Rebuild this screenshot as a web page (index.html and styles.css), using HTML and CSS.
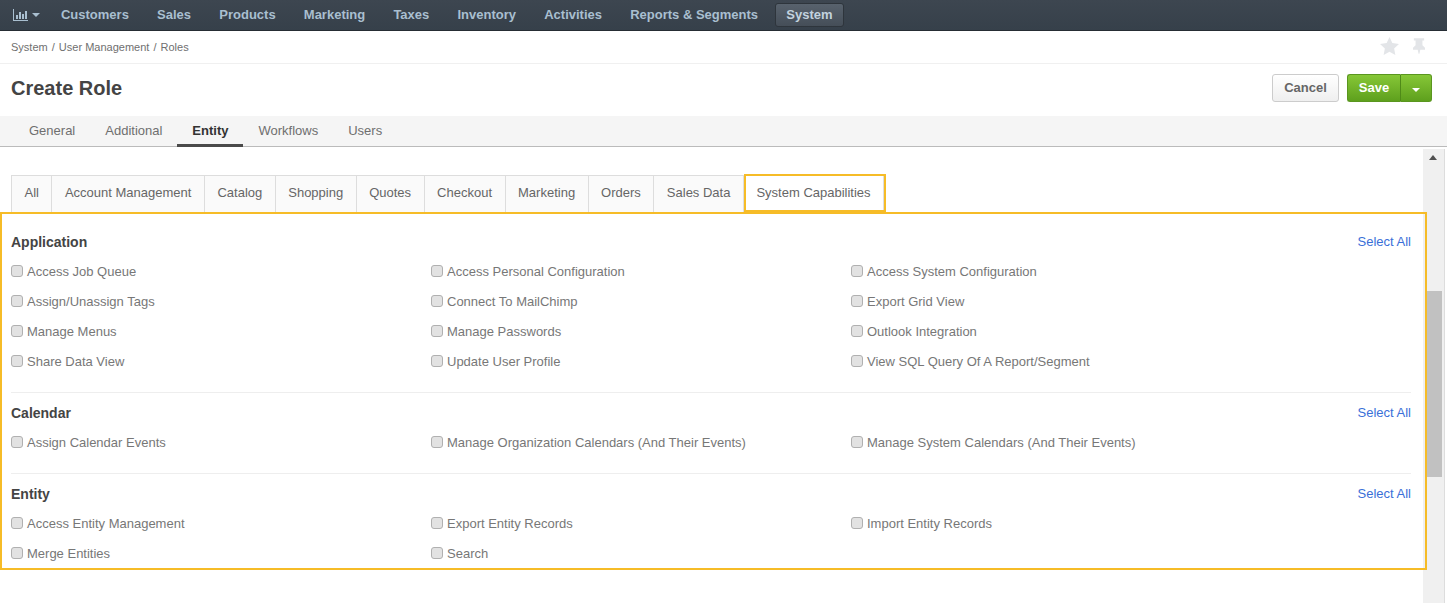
FILE: index.html
```html
<!DOCTYPE html>
<html lang="en">
<head>
  <meta charset="UTF-8" />
  <title>Create Role</title>
  <link rel="stylesheet" href="styles.css">
</head>
<body>

  <nav class="topnav">
    <a class="topnav-chart" href="#">
      <svg width="15" height="12" viewBox="0 0 15 12"><path fill="#a9bfd0" d="M0 0h1v11h14v1H0zM3 6h2v4H3zM6 3h2v7H6zM9 5h2v5H9zM12 2h2v8h-2z"/></svg>
      <span class="caret caret-nav"></span>
    </a>
    <a href="#">Customers</a>
    <a href="#">Sales</a>
    <a href="#">Products</a>
    <a href="#">Marketing</a>
    <a href="#">Taxes</a>
    <a href="#">Inventory</a>
    <a href="#">Activities</a>
    <a href="#">Reports &amp; Segments</a>
    <a class="active" href="#">System</a>
  </nav>

  <div class="crumbs">
    <div class="crumbs-path">System <i>/</i> User Management <i>/</i> Roles</div>
    <div class="crumbs-icons">
      <svg width="19" height="18" viewBox="0 0 20 19"><path fill="#e3e5e8" d="M10 0l3 6.400 7 .9-5.100 4.800 1.300 6.900L10 15.600 3.800 19l1.300-6.900L0 7.300l7-.9z"/></svg>
      <svg width="12" height="18" viewBox="0 0 14 18"><path fill="#e3e5e8" d="M1 0h12v2.500h-2V8l3 3v2.500H8.500L7.500 18h-1l-1-4.500H0V11l3-3V2.500H1z"/></svg>
    </div>
  </div>

  <header class="title-bar">
    <h1>Create Role</h1>
    <div class="actions">
      <button class="btn-cancel" type="button">Cancel</button>
      <div class="save-group">
        <button class="btn-save" type="button">Save</button>
        <button class="btn-save-more" type="button"><span class="caret"></span></button>
      </div>
    </div>
  </header>

  <div class="main-tabs">
    <a href="#">General</a>
    <a href="#">Additional</a>
    <a class="active" href="#">Entity</a>
    <a href="#">Workflows</a>
    <a href="#">Users</a>
  </div>

  <div class="content">
    <div class="content-body">
      <div class="sub-tabs">
        <a href="#">All</a>
        <a href="#">Account Management</a>
        <a href="#">Catalog</a>
        <a href="#">Shopping</a>
        <a href="#">Quotes</a>
        <a href="#">Checkout</a>
        <a href="#">Marketing</a>
        <a href="#">Orders</a>
        <a href="#">Sales Data</a>
        <a class="active" href="#">System Capabilities</a>
      </div>

      <section class="group">
        <div class="group-head"><h2>Application</h2><a href="#">Select All</a></div>
        <div class="perms">
          <label><input type="checkbox">Access Job Queue</label>
          <label><input type="checkbox">Access Personal Configuration</label>
          <label><input type="checkbox">Access System Configuration</label>
          <label><input type="checkbox">Assign/Unassign Tags</label>
          <label><input type="checkbox">Connect To MailChimp</label>
          <label><input type="checkbox">Export Grid View</label>
          <label><input type="checkbox">Manage Menus</label>
          <label><input type="checkbox">Manage Passwords</label>
          <label><input type="checkbox">Outlook Integration</label>
          <label><input type="checkbox">Share Data View</label>
          <label><input type="checkbox">Update User Profile</label>
          <label><input type="checkbox">View SQL Query Of A Report/Segment</label>
        </div>
      </section>

      <section class="group">
        <div class="group-head"><h2>Calendar</h2><a href="#">Select All</a></div>
        <div class="perms">
          <label><input type="checkbox">Assign Calendar Events</label>
          <label><input type="checkbox">Manage Organization Calendars (And Their Events)</label>
          <label><input type="checkbox">Manage System Calendars (And Their Events)</label>
        </div>
      </section>

      <section class="group">
        <div class="group-head"><h2>Entity</h2><a href="#">Select All</a></div>
        <div class="perms">
          <label><input type="checkbox">Access Entity Management</label>
          <label><input type="checkbox">Export Entity Records</label>
          <label><input type="checkbox">Import Entity Records</label>
          <label><input type="checkbox">Merge Entities</label>
          <label><input type="checkbox">Search</label>
        </div>
      </section>
    </div>

    <div class="scrollbar">
      <span class="scroll-up"></span>
      <span class="scroll-thumb"></span>
    </div>
  </div>

  <!-- yellow callouts drawn over the page -->
  <div class="mark mark-tab"></div>
  <div class="mark mark-panel"></div>

</body>
</html>
```

FILE: styles.css
```css
html, body {
  height: 603px;
  overflow: hidden;
}

body {
  margin: 0;
  position: relative;
  font-family: "Liberation Sans", Arial, sans-serif;
  font-size: 14px;
  color: #6b6b6b;
  background-color: #fff;
}

a {
  text-decoration: none;
}

.caret {
  display: inline-block;
  border-top: 4px solid #fff;
  border-left: 4px solid transparent;
  border-right: 4px solid transparent;
}

/* top nav */
.topnav {
  display: flex;
  align-items: center;
  gap: 6.2px;
  height: 30px;
  padding-left: 3px;
  background: linear-gradient(#3d4650, #36404a);
  border-bottom: 1px solid #262d34;
}

.topnav a {
  padding: 0 11px;
  line-height: 24px;
  font-size: 13px;
  font-weight: bold;
  color: #a9bfd0;
  border-radius: 3px;
}

.topnav a.active {
  padding: 0 10px;
  color: #c3d3df;
  background: linear-gradient(#58626d, #454e58);
  border: 1px solid #2e353c;
  line-height: 22px;
}

.topnav a.topnav-chart {
  display: flex;
  align-items: center;
  gap: 4px;
  padding: 0 3.8px 0 10px;
}

.caret-nav {
  border-top-color: #a9bfd0;
}

/* breadcrumb */
.crumbs {
  display: flex;
  align-items: center;
  justify-content: space-between;
  height: 33px;
  padding: 0 22px 0 11px;
  border-bottom: 1px solid #f0f0f0;
  box-sizing: border-box;
  font-size: 11px;
  color: #6f6f6f;
}

.crumbs-path i {
  font-style: normal;
  margin: 0 1px;
}

.crumbs-icons {
  display: flex;
  align-items: center;
  gap: 14px;
  margin-bottom: 2px;
}

/* title row */
.title-bar {
  display: flex;
  align-items: center;
  justify-content: space-between;
  height: 52px;
  padding: 0 15px 4px 11px;
  box-sizing: border-box;
}

h1 {
  margin: 0;
  font-size: 20px;
  color: #444;
}

.actions {
  display: flex;
  gap: 8px;
}

.actions button {
  height: 28px;
  font-family: inherit;
  font-size: 13px;
  font-weight: bold;
  border-radius: 3px;
}

.btn-cancel {
  width: 67px;
  padding: 0 0 2px;
  color: #666;
  background: linear-gradient(#fff, #efefef);
  border: 1px solid #ccc;
}

.save-group {
  display: flex;
}

.actions .btn-save {
  width: 54px;
  padding: 0 0 2px;
  color: #fff;
  background: linear-gradient(#86c737, #5ea01d);
  border: 1px solid #5a961f;
  border-right: 1px solid #4f8a18;
  border-radius: 3px 0 0 3px;
}

.actions .btn-save-more {
  width: 31px;
  padding: 0 0 2px;
  background: linear-gradient(#86c737, #5ea01d);
  border: 1px solid #5a961f;
  border-left: 0;
  border-radius: 0 3px 3px 0;
}

/* main tabs */
.main-tabs {
  display: flex;
  height: 30px;
  padding-left: 14px;
  background-color: #f5f5f5;
  border-bottom: 1px solid #bbb;
}

.main-tabs a {
  padding: 0 15px;
  margin-bottom: -1px;
  line-height: 29px;
  font-size: 13px;
  color: #6f6f6f;
}

.main-tabs a.active {
  font-weight: bold;
  color: #333;
  border-bottom: 3px solid #4a4a4a;
  height: 28px;
}

/* scrolling area */
.content {
  display: flex;
  height: 456px;
}

.content-body {
  width: 1400px;
  padding: 28px 0 0 11px;
}

.sub-tabs {
  display: flex;
  height: 37px;
  margin-bottom: 9px;
  border-bottom: 1px solid #ddd;
}

.sub-tabs a {
  padding: 0 12.5px;
  line-height: 33px;
  font-size: 13px;
  color: #666;
  background-color: #fafafa;
  border: 1px solid #ddd;
  border-left: 0;
  border-bottom: 0;
}

.sub-tabs a:first-child {
  border-left: 1px solid #ddd;
}

.sub-tabs a.active {
  background-color: #fff;
}

.group {
  padding: 12px 0 16px;
  border-bottom: 1px solid #eee;
}

.group:last-child {
  border-bottom: 0;
}

.group-head {
  display: flex;
  align-items: center;
  justify-content: space-between;
  height: 16px;
  margin-bottom: 6px;
}

h2 {
  margin: 0;
  font-size: 14px;
  color: #444;
}

.group-head a {
  margin: 0 0 2px;
  font-size: 13px;
  color: #3a6fd8;
}

.perms {
  display: grid;
  grid-template-columns: repeat(3, 420px);
}

.perms label {
  display: flex;
  align-items: center;
  height: 30px;
  font-size: 13px;
  color: #777;
}

.perms input {
  appearance: none;
  width: 12px;
  height: 12px;
  margin: 0 4px 0 0;
  background-color: #e2e2e2;
  border: 1px solid #b0b0b0;
  border-radius: 3px;
  box-sizing: border-box;
}

/* scrollbar */
.scrollbar {
  position: relative;
  width: 21px;
  margin: 2px 0 0 12px;
  background-color: #f0f0f0;
  border-right: 1px solid #ddd;
}

.scroll-up {
  position: absolute;
  top: 6px;
  left: 6px;
  border-bottom: 5px solid #505050;
  border-left: 4px solid transparent;
  border-right: 4px solid transparent;
}

.scroll-thumb {
  position: absolute;
  top: 142px;
  left: 4px;
  width: 15px;
  height: 186px;
  background-color: #c1c1c1;
}

/* callouts */
.mark {
  position: absolute;
  border: 2px solid #f6bc27;
  box-sizing: border-box;
}

.mark-tab {
  left: 744px;
  top: 174px;
  width: 142px;
  height: 38px;
}

.mark-panel {
  left: 0;
  top: 212px;
  width: 1427px;
  height: 358px;
}
```
